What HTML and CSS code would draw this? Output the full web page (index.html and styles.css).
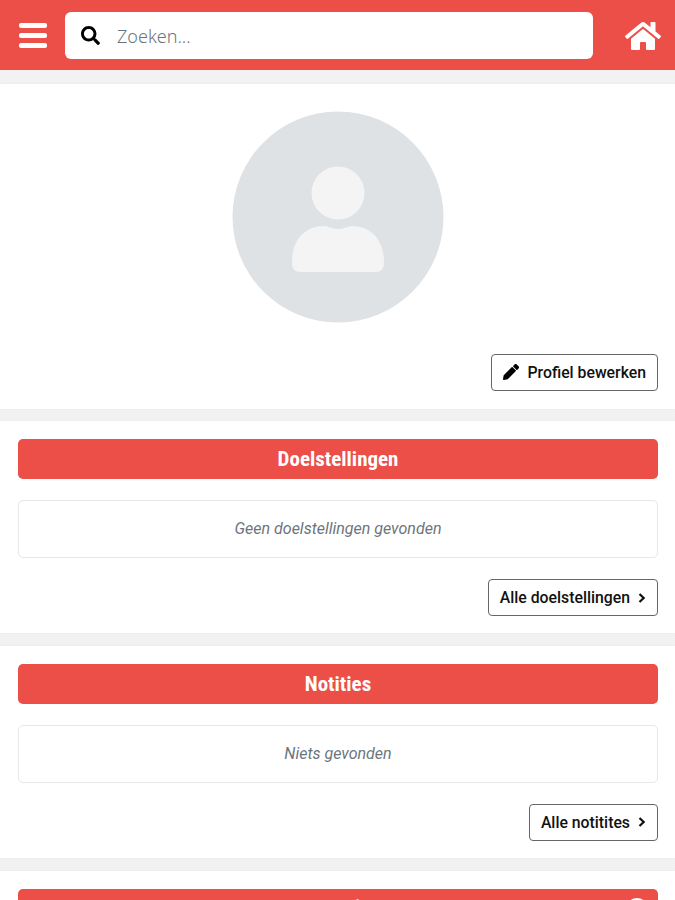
FILE: index.html
```html
<!DOCTYPE html>
<html lang="nl">
<head>
  <meta charset="UTF-8" />
  <meta name="viewport" content="width=device-width, initial-scale=1.0"/>
  <title>Profiel</title>
  <link rel="stylesheet" href="styles.css">
</head>
<body>
  <header class="navbar">
    <button class="menu" aria-label="Menu"><span></span><span></span><span></span></button>
    <label class="search">
      <svg width="19" height="19" viewBox="0 0 512 512"><path d="M505 442.700 405.300 343c-4.500-4.500-10.600-7-17-7H372c27.600-35.300 44-79.700 44-128C416 93.100 322.900 0 208 0S0 93.100 0 208s93.100 208 208 208c48.300 0 92.700-16.400 128-44v16.300c0 6.400 2.500 12.500 7 17l99.700 99.700c9.400 9.400 24.600 9.400 33.900 0l28.300-28.300c9.400-9.400 9.400-24.600.1-34zM208 336c-70.700 0-128-57.200-128-128 0-70.700 57.200-128 128-128 70.700 0 128 57.200 128 128 0 70.700-57.200 128-128 128z"/></svg>
      <input type="text" placeholder="Zoeken..." />
    </label>
    <a class="home" href="#" aria-label="Home">
      <svg width="36" height="32" viewBox="0 0 576 512"><path fill="#fff" d="M280.400 148.300 96 300.100V464a16 16 0 0 0 16 16l112.100-.3a16 16 0 0 0 15.900-16V368a16 16 0 0 1 16-16h64a16 16 0 0 1 16 16v95.600a16 16 0 0 0 16 16.100L464 480a16 16 0 0 0 16-16V300L295.700 148.300a12.200 12.200 0 0 0-15.300 0zM571.600 251.500 488 182.600V44.100a12 12 0 0 0-12-12h-56a12 12 0 0 0-12 12v72.600L318.500 43a48 48 0 0 0-61 0L4.300 251.500a12 12 0 0 0-1.600 16.900l25.500 31a12 12 0 0 0 16.900 1.600l235.300-193.700a12.200 12.200 0 0 1 15.300 0L531 301a12 12 0 0 0 16.900-1.600l25.500-31a12 12 0 0 0-1.800-16.900z"/></svg>
    </a>
  </header>

  <section class="card profile">
    <svg class="avatar" width="212" height="212" viewBox="0 0 212 212">
      <circle cx="106" cy="106" r="105.500" fill="#dee2e5"/>
      <circle cx="106" cy="82" r="26.500" fill="#f4f4f5"/>
      <path fill="#f4f4f5" d="M60 151c0-22 13-36 32-36 5 0 7 3 14 3s9-3 14-3c19 0 32 14 32 36 0 7-3 10-9 10H69c-6 0-9-3-9-10z"/>
    </svg>
    <a class="btn" href="#">
      <svg width="16" height="16" viewBox="0 0 512 512"><path d="M498 142l-46.100 46.100c-4.700 4.700-12.300 4.700-17 0l-111-111c-4.700-4.700-4.700-12.300 0-17L370 14c18.700-18.700 49.100-18.700 67.900 0l60.100 60.100c18.800 18.700 18.800 49.100 0 67.900zM284.200 99.800 21.600 362.400.4 483.900c-2.900 16.400 11.400 30.600 27.800 27.800l121.500-21.300 262.600-262.600c4.700-4.700 4.700-12.300 0-17l-111-111c-4.800-4.700-12.400-4.700-17.100 0z"/></svg>
      <span>Profiel bewerken</span>
    </a>
  </section>

  <section class="card">
    <h2>Doelstellingen</h2>
    <p class="empty">Geen doelstellingen gevonden</p>
    <a class="btn" href="#">
      <span>Alle doelstellingen</span>
      <svg width="8" height="10" viewBox="0 0 8 10"><path d="M1.500 1 5.700 5 1.500 9" fill="none" stroke="#111" stroke-width="2.200"/></svg>
    </a>
  </section>

  <section class="card">
    <h2>Notities</h2>
    <p class="empty">Niets gevonden</p>
    <a class="btn" href="#">
      <span>Alle notitites</span>
      <svg width="8" height="10" viewBox="0 0 8 10"><path d="M1.500 1 5.700 5 1.500 9" fill="none" stroke="#111" stroke-width="2.200"/></svg>
    </a>
  </section>

  <section class="card last">
    <div class="bar">
      <span class="dot"></span>
      <span class="info"></span>
    </div>
  </section>
</body>
</html>
```

FILE: styles.css
```css
* {
  box-sizing: border-box;
}

body {
  margin: 0;
  height: 900px;
  overflow: hidden;
  background-color: #f2f2f2;
  font-family: Roboto, "Liberation Sans", sans-serif;
  color: #111;
}

.navbar {
  display: flex;
  align-items: center;
  height: 70px;
  padding: 0 14px 0 19px;
  background-color: #eb4f47;
}

.menu {
  display: flex;
  flex-direction: column;
  gap: 5px;
  width: 28px;
  padding: 0;
  border: none;
  background: none;
}

.menu span {
  height: 5px;
  border-radius: 2px;
  background-color: white;
}

.search {
  display: flex;
  align-items: center;
  width: 528px;
  height: 47px;
  margin-left: 18px;
  padding-left: 16px;
  border-radius: 6px;
  background-color: white;
}

.search input {
  flex: 1;
  margin-left: 17px;
  padding: 1px 0 0;
  border: none;
  background: none;
  font-family: "Noto Sans", sans-serif;
  font-size: 18px;
  font-weight: 300;
}

.search input::placeholder {
  color: #6c757d;
}

.home {
  display: flex;
  margin-left: auto;
  padding-top: 1px;
}

.card {
  display: flex;
  flex-direction: column;
  height: 212px;
  margin-top: 12.700px;
  padding: 18px 17px 0 18px;
  background-color: white;
  box-shadow: 0 0 2px rgba(0,0,0,0.06);
}

.profile {
  height: 325px;
  margin-top: 13.500px;
  padding-top: 27px;
}

.avatar {
  align-self: center;
  margin-bottom: 31px;
}

h2 {
  margin: 0 0 21px;
  border-radius: 5px;
  background-color: #eb4f47;
  color: white;
  font-family: "Roboto Condensed", Roboto, sans-serif;
  font-size: 21px;
  font-weight: bold;
  font-stretch: 75%;
  line-height: 40px;
  text-align: center;
}

.empty {
  height: 58px;
  margin: 0 0 21px;
  border: 1px solid #e6e7e9;
  border-radius: 5px;
  color: #6c757d;
  font-size: 16px;
  font-style: italic;
  line-height: 55px;
  text-align: center;
}

.btn {
  display: flex;
  align-self: flex-end;
  align-items: center;
  gap: 8px;
  height: 37px;
  padding: 0 11px;
  border: 1px solid #666;
  border-radius: 4px;
  color: #111;
  font-size: 15.800px;
  font-weight: 500;
  text-decoration: none;
}

.last {
  height: 30px;
}

.bar {
  display: flex;
  justify-content: flex-end;
  height: 12px;
  padding: 9px 10px 0 0;
  border-radius: 5px 5px 0 0;
  background-color: #eb4f47;
  overflow: hidden;
}

.dot {
  width: 3px;
  height: 3px;
  margin: 1px 267px 0 0;
  border-radius: 50%;
  background-color: #fbd5d2;
}

.info {
  width: 22px;
  height: 22px;
  border-radius: 50%;
  background-color: white;
}
```
